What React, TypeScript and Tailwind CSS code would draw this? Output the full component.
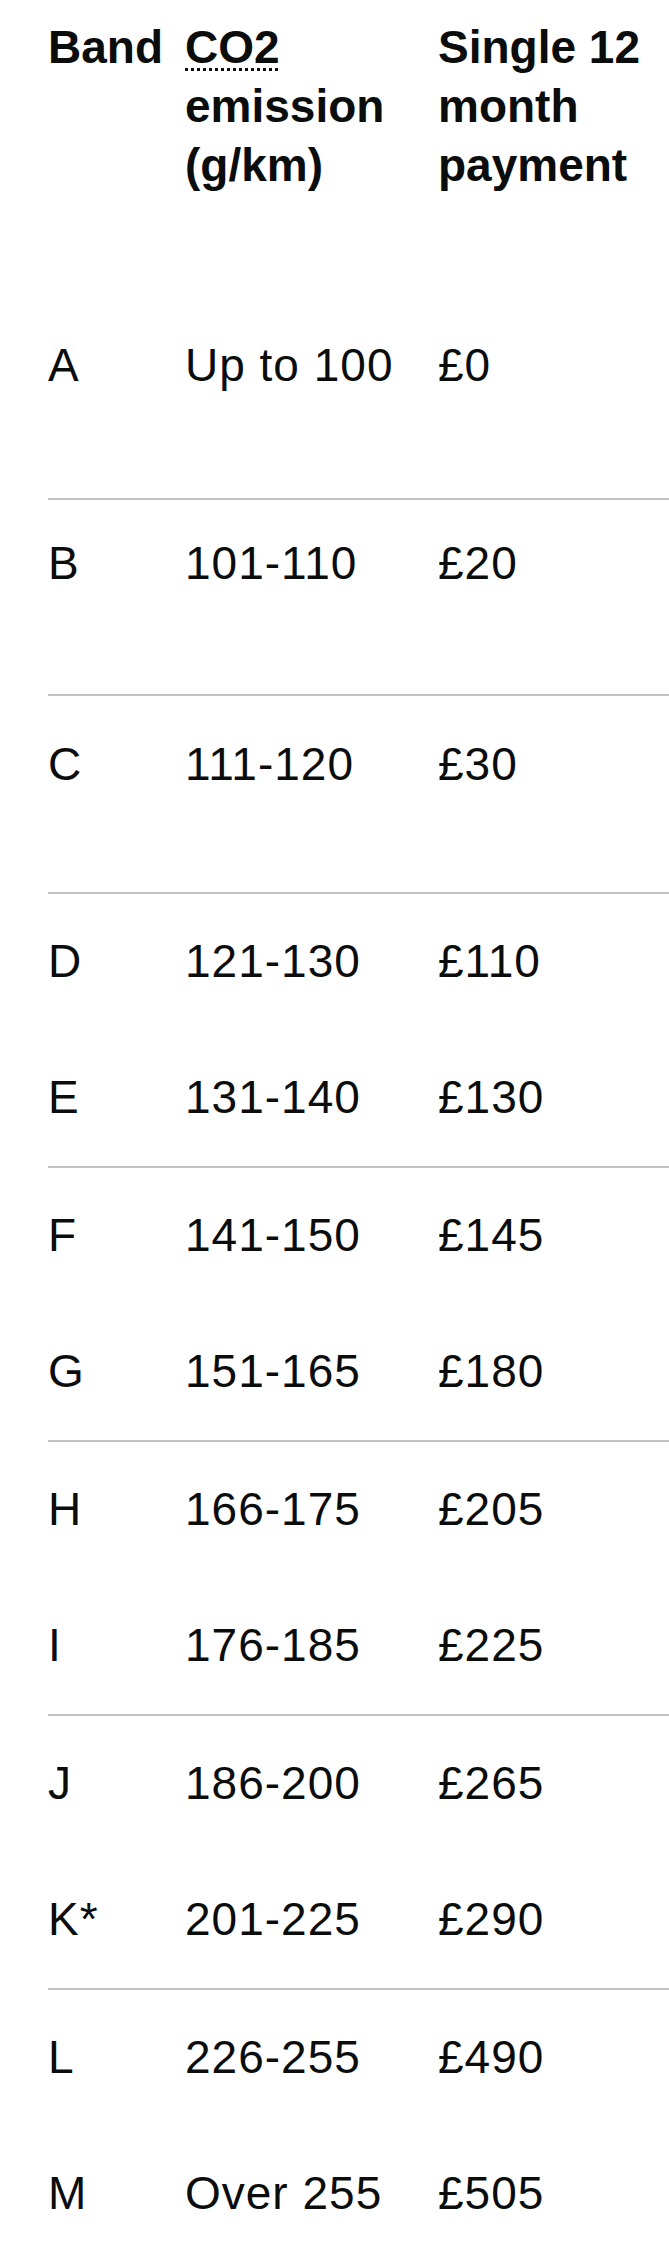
import React from 'react';

type Band = {
  band: string;
  co2: string;
  price: string;
  rowClass: string;
};

// spacing per row is uneven in the source, so each row carries its own padding
const bands: Band[] = [
  { band: 'A', co2: 'Up to 100', price: '£0', rowClass: 'pt-[143px] pb-[105px] border-b-2' },
  { band: 'B', co2: '101-110', price: '£20', rowClass: 'pt-[36px] pb-[103px] border-b-2' },
  { band: 'C', co2: '111-120', price: '£30', rowClass: 'pt-[41px] pb-[100px] border-b-2' },
  { band: 'D', co2: '121-130', price: '£110', rowClass: 'pt-10 pb-[41px]' },
  { band: 'E', co2: '131-140', price: '£130', rowClass: 'pt-10 pb-[41px] border-b-2' },
  { band: 'F', co2: '141-150', price: '£145', rowClass: 'pt-10 pb-[41px]' },
  { band: 'G', co2: '151-165', price: '£180', rowClass: 'pt-10 pb-[41px] border-b-2' },
  { band: 'H', co2: '166-175', price: '£205', rowClass: 'pt-10 pb-[41px]' },
  { band: 'I', co2: '176-185', price: '£225', rowClass: 'pt-10 pb-[41px] border-b-2' },
  { band: 'J', co2: '186-200', price: '£265', rowClass: 'pt-10 pb-[41px]' },
  { band: 'K*', co2: '201-225', price: '£290', rowClass: 'pt-10 pb-[41px] border-b-2' },
  { band: 'L', co2: '226-255', price: '£490', rowClass: 'pt-10 pb-[41px]' },
  { band: 'M', co2: 'Over 255', price: '£505', rowClass: 'pt-10 pb-[41px]' },
];

export default function App() {
  return (
    <div className="min-h-screen bg-white pl-[48px] text-[#0b0c0c] font-['Liberation_Sans',Arial,sans-serif] text-[46px] leading-[55px]">
      {/* Header */}
      <div className="grid grid-cols-[137px_253px_1fr] pt-[18px] font-bold leading-[59px]">
        <div>Band</div>
        <div>
          <abbr
            title="Carbon dioxide"
            className="underline decoration-dotted decoration-[3px] underline-offset-[5px]"
          >
            CO2
          </abbr>
          <br />
          emission
          <br />
          (g/km)
        </div>
        <div>
          Single 12
          <br />
          month
          <br />
          payment
        </div>
      </div>

      {/* Rows */}
      {bands.map((b) => (
        <div
          key={b.band}
          className={`grid grid-cols-[137px_253px_1fr] border-[#bfc1c3] tracking-[1px] ${b.rowClass}`}
        >
          <div>{b.band}</div>
          <div>{b.co2}</div>
          <div>{b.price}</div>
        </div>
      ))}
    </div>
  );
}
